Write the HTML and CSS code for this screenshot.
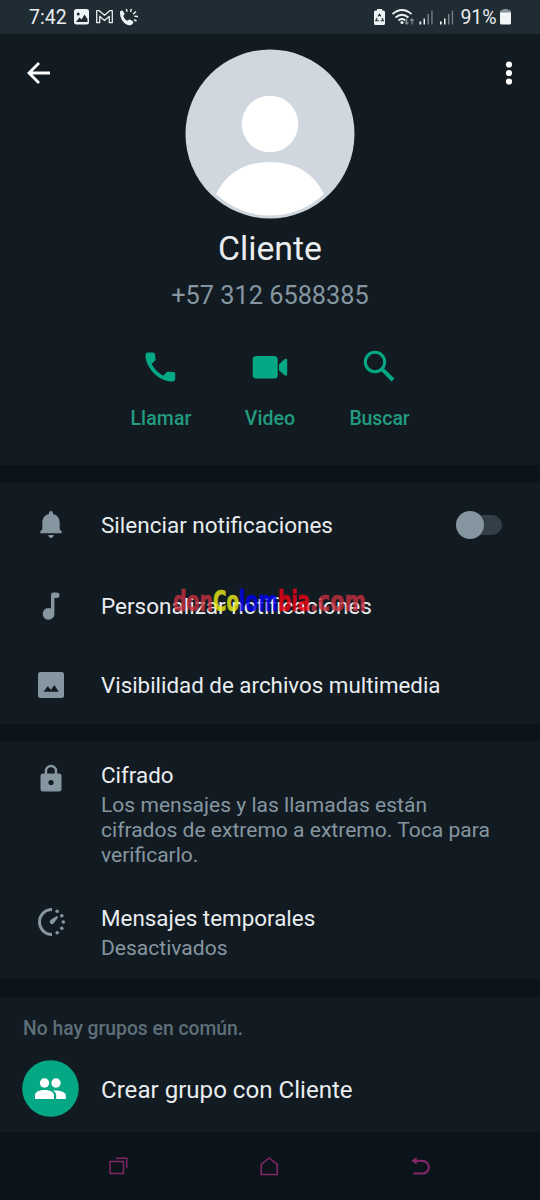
FILE: index.html
```html
<!DOCTYPE html>
<html lang="es">
<head>
<meta charset="utf-8">
<title>Cliente</title>
<link rel="stylesheet" href="styles.css">
</head>
<body>
<div class="status">
  <span class="clock">7:42</span>
  <svg class="status-left" width="66" height="20" viewBox="0 0 66 20">
    <rect x="1" y="1" width="15" height="15.500" rx="2.500" fill="#eef3f5"/>
    <circle cx="5.200" cy="6" r="1.500" fill="#202c33"/>
    <path d="M3 14l3.500-4.500 2 2 3-5 3 4.500v3z" fill="#202c33"/>
    <path d="M23.700 14.700V2.700h2.600l5.200 4.600 5.200-4.600h2.600v12h-3V8.300l-4.800 4.200-4.800-4.200v6.400z" fill="none" stroke="#e6ecef" stroke-width="1.300" stroke-linejoin="round"/>
    <path d="M47 3.500l2.200-1.300 2.600 3.500-1.500 2.200c.8 2.400 2 3.800 4.300 4.800l1.900-1.400 4 2.500c-.6 2.800-2.600 4.200-5.500 3.200-4.700-1.500-8.400-6.800-8-13.500z" fill="#eef3f5"/>
    <path d="M53.300 1l.9 2.800M58.300.8L57.600 4M63 3.500l-3 2.800M65 8.500l-3.600-.2M63.500 13.200l-2.500-1.600" stroke="#eef3f5" stroke-width="1.400"/>
  </svg>
  <svg class="status-right" width="82" height="20" viewBox="0 0 82 20">
    <path d="M3 2.500V1h5v1.500h1.500q1.500 0 1.500 1.500v11.500q0 1.500-1.500 1.500h-8Q0 17 0 15.500V4q0-1.500 1.500-1.500z" fill="#eef3f5"/>
    <path d="M4 8.500l1.500-2.300L7 8.500M8 10l1.300 2.700H6.500M4.700 12.700H1.800L3.100 10" fill="none" stroke="#202c33" stroke-width="1.100"/>
    <g fill="none" stroke="#eef3f5" stroke-width="1.700"><path d="M18.500 6q9.500-8 19 0M21.500 9.500q6.500-5.500 13 0M24.500 12.500q3.500-3 7 0"/></g>
    <circle cx="28" cy="14.500" r="1.500" fill="#eef3f5"/>
    <path d="M32.700 10.500v5.500m-1.800-1.800l1.800 2 1.800-2M38 16.500V11m-1.800 1.800l1.800-2 1.800 2" fill="none" stroke="#83919a" stroke-width="1.100"/>
    <g fill="#eef3f5"><path d="M45.500 13.500h1.700v3h-1.700zM49.500 10.500h1.500v6h-1.500zM66 13.500h1.700v3H66zM70 10.500h1.500v6H70z"/></g>
    <g fill="#75828a"><path d="M53.500 6H55v10.500h-1.500zM57.300 2.500h1.300v14h-1.300zM74 6h1.500v10.500H74zM77.800 2.500h1.300v14h-1.300z"/></g>
  </svg>
  <span class="percent">91%</span>
  <svg class="battery" width="12" height="18" viewBox="0 0 12 18"><path d="M3 2V1h5v1h1.500Q11 2 11 5H0q0-3 1.500-3z" fill="#85929a"/><path d="M0 4.500h11V15q0 1.500-1.500 1.500h-8Q0 16.500 0 15z" fill="#f1f5f6"/></svg>
</div>

<header class="profile">
  <svg class="back" width="26" height="26" viewBox="0 0 26 26"><path d="M25 13H3.500M14 3L4 13l10 10" fill="none" stroke="#fff" stroke-width="2.800"/></svg>
  <svg class="avatar" width="170" height="170" viewBox="0 0 170 170">
    <circle cx="85" cy="85" r="84.500" fill="#d0d7de"/>
    <circle cx="85" cy="75" r="28.300" fill="#fff"/>
    <path d="M31 145Q47 113 85 113t54 32Q116 166.500 85 166.500T31 145z" fill="#fff"/>
  </svg>
  <svg class="more" width="8" height="26" viewBox="0 0 8 26" fill="#fff"><circle cx="4" cy="4.500" r="3.100"/><circle cx="4" cy="13" r="3.100"/><circle cx="4" cy="21.500" r="3.100"/></svg>
  <h1 class="name">Cliente</h1>
  <p class="phone">+57 312 6588385</p>
  <div class="actions">
    <div class="action">
      <svg width="40" height="40" viewBox="0 0 40 40"><path d="M6.800 5.500h5.300q1.600 0 1.800 1.600l.7 4.900q.1 1-.6 1.700l-3.400 3.400q4.300 7.700 11.500 11.600l3.500-3.500q.7-.7 1.700-.5l5.300.4q1.600.2 1.600 1.900v4.700q0 2.500-2.500 2.700C19 35.500 4.600 21.500 4.500 8.300Q4.500 5.500 6.800 5.500z" fill="#05a884"/></svg>
      <span>Llamar</span>
    </div>
    <div class="action">
      <svg width="40" height="40" viewBox="0 0 40 40" fill="#05a884"><rect x="2.700" y="9" width="25" height="22.500" rx="3.500"/><path d="M29 17.200l5.500-5q2.700-1.300 2.700 1v14.100q0 2.300-2.700 1L29 23.500z"/></svg>
      <span>Video</span>
    </div>
    <div class="action buscar">
      <svg width="40" height="40" viewBox="0 0 40 40" fill="none" stroke="#05a884"><circle cx="15" cy="15" r="9.700" stroke-width="3.100"/><path d="M22.300 22.300l10.700 10.700" stroke-width="4"/></svg>
      <span>Buscar</span>
    </div>
  </div>
</header>

<section class="card settings">
  <div class="row">
    <svg class="icon" width="32" height="32" viewBox="0 0 32 32" fill="#8696a0"><path d="M16 2q2 0 2 2v1c4.500 1 6.700 4.500 6.700 9v6.500l2 1.800v1.900H5.300v-1.900l2-1.800V14c0-4.500 2.200-8 6.700-9V4q0-2 2-2z"/><path d="M13.300 26h5.400q-.5 3-2.700 3t-2.700-3z"/></svg>
    <span class="label">Silenciar notificaciones</span>
    <span class="switch"><i class="knob"></i></span>
  </div>
  <div class="row">
    <svg class="icon" width="32" height="32" viewBox="0 0 32 32" fill="#8696a0"><path d="M16 18.500V5q0-2.500 2.500-2.500h3.200q2.800 0 2.800 2.800t-2.800 2.700h-2.300v15a5.900 5.900 0 1 1-3.400-4.500z"/></svg>
    <span class="label">Personalizar notificaciones</span>
    <svg class="watermark" width="200" height="50" viewBox="0 0 200 50">
      <text class="red" x="2" y="34" textLength="40" lengthAdjust="spacingAndGlyphs">don</text>
      <text class="yellow" x="42" y="34" textLength="26" lengthAdjust="spacingAndGlyphs">Co</text>
      <text class="blue" x="68" y="34" textLength="39" lengthAdjust="spacingAndGlyphs">lom</text>
      <text class="bright" x="107" y="34" textLength="32" lengthAdjust="spacingAndGlyphs">bia</text>
      <text class="red" x="139" y="34" textLength="56" lengthAdjust="spacingAndGlyphs">.com</text>
    </svg>
  </div>
  <div class="row">
    <svg class="icon" width="32" height="32" viewBox="0 0 32 32"><rect x="3" y="3" width="26" height="26" rx="2.500" fill="#8696a0"/><path d="M8.500 22.800l4.300-5.500 3.200 3.800 3.300-5.100 4.500 6.800z" fill="#121b22"/></svg>
    <span class="label media">Visibilidad de archivos multimedia</span>
  </div>
</section>

<section class="card privacy">
  <div class="detail">
    <svg class="icon" width="32" height="32" viewBox="0 0 32 32"><path d="M11 12V8a5 5 0 0 1 10 0V12" fill="none" stroke="#8696a0" stroke-width="2.400"/><rect x="5.500" y="10.500" width="21" height="18" rx="2.500" fill="#8696a0"/><circle cx="16" cy="19.500" r="2.600" fill="#121b22"/></svg>
    <div class="copy">
      <div class="title">Cifrado</div>
      <p class="sub">Los mensajes y las llamadas están<br>cifrados de extremo a extremo. Toca para<br>verificarlo.</p>
    </div>
  </div>
  <div class="detail">
    <svg class="icon" width="32" height="32" viewBox="0 0 32 32"><path d="M17 3.500a12.500 12.500 0 0 0 0 25" fill="none" stroke="#8696a0" stroke-width="3"/><path d="M21.800 9.900l1.400 1.400-4.600 6.100q-1.500 1.500-3.200 0t0-3.300z" fill="#8696a0"/><g fill="#8696a0"><circle cx="22.200" cy="5.200" r="1.800"/><circle cx="26.800" cy="9.700" r="1.800"/><circle cx="28.300" cy="16" r="1.800"/><circle cx="26.800" cy="22.300" r="1.800"/><circle cx="22.200" cy="26.800" r="1.800"/></g></svg>
    <div class="copy">
      <div class="title">Mensajes temporales</div>
      <p class="sub">Desactivados</p>
    </div>
  </div>
</section>

<section class="card groups">
  <p class="none">No hay grupos en común.</p>
  <div class="group">
    <svg width="57" height="57" viewBox="0 0 57 57"><circle cx="28.500" cy="28.500" r="28.300" fill="#05a884"/><g fill="#fff"><circle cx="22.500" cy="23" r="4.700"/><circle cx="34" cy="23" r="4.700"/><path d="M13 39v-3.700c0-7 19-7 19 0V39zM34.200 39v-3.700q0-2.700-3.200-4.700c5.500-.7 12.800 1 12.800 4.700V39z"/></g></svg>
    <span class="label create">Crear grupo con Cliente</span>
  </div>
</section>

<nav class="nav">
  <svg width="20" height="20" viewBox="0 0 20 20" fill="none" stroke="#812666" stroke-width="1.500"><rect x="1" y="5.500" width="13.500" height="12" rx=".5"/><path d="M7 2.300h10.700v9.800"/></svg>
  <svg width="20" height="20" viewBox="0 0 20 20" fill="none" stroke="#812666" stroke-width="1.600"><path d="M1.200 18.500V8.500l8-6.500 8 6.500v10z"/></svg>
  <svg width="20" height="20" viewBox="0 0 20 20"><path d="M4 4.800h7.500a6.300 6.300 0 0 1 0 12.700H2.300" fill="none" stroke="#812666" stroke-width="2.200"/><path d="M.3 4.800l5.400-3.600v7.200z" fill="#812666"/></svg>
</nav>
</body>
</html>
```
FILE: styles.css
```css
* { box-sizing: border-box; }
body { margin: 0; width: 540px; height: 1200px; background: #0b141a; color: #e9edef; font-family: Roboto, "Liberation Sans", sans-serif; overflow: hidden; }
svg { display: block; flex: none; }
h1, p { margin: 0; font-weight: 400; }
.status { height: 34px; background: #202c33; display: flex; align-items: flex-start; padding: 8px 28px 0 29px; font-size: 19.5px; line-height: 19px; white-space: nowrap; }
.clock { width: 46px; }
.status-right { margin-left: 235px; }
.percent { width: 40px; margin-left: 4px; }
.battery { margin-left: 1px; }
.profile { height: 431px; background: #121b22; display: grid; grid-template-columns: 185px 170px 185px; grid-template-rows: 170px 61px 30px 1fr; padding-top: 15px; }
.back { margin: 11px 0 0 25px; }
.more { margin: 11px 0 0 150px; }
.name { grid-column: 1 / 4; text-align: center; font-size: 33.8px; line-height: 40px; padding-top: 10px; }
.phone { grid-column: 1 / 4; text-align: center; color: #8696a0; font-size: 25.3px; line-height: 31px; }
.actions { grid-column: 1 / 4; display: grid; grid-template-columns: repeat(3, 109px); justify-content: center; padding-top: 37px; }
.action { display: flex; flex-direction: column; align-items: center; gap: 20px; color: #229b80; font-size: 19.5px; font-weight: 500; line-height: 24px; letter-spacing: .1px; }
.buscar { letter-spacing: -.1px; padding-left: 1px; }
.card { background: #121b22; margin-top: 18px; }
.settings { height: 241px; display: grid; grid-template-rows: 83px 79px 79px; }
.row { display: flex; align-items: center; position: relative; padding-left: 35px; }
.icon { margin-right: 34px; }
.label { font-size: 22.5px; line-height: 28px; padding-top: 1px; white-space: nowrap; }
.media { font-size: 22.35px; }
.create { font-size: 24.1px; padding-top: 2px; }
.switch { position: relative; margin: 0 38px 0 auto; width: 46px; height: 28px; }
.switch::before { content: ""; position: absolute; left: 8px; right: 0; top: 4px; height: 20px; border-radius: 10px; background: #323f47; }
.knob { position: relative; display: block; width: 28px; height: 28px; border-radius: 50%; background: #8696a0; }
.watermark { position: absolute; left: 171px; top: 11px; font: 700 28px "DejaVu Sans", sans-serif; opacity: .8; stroke-width: .7px; stroke-linejoin: round; }
.red { fill: #c6303f; stroke: #c6303f; }
.yellow { fill: #ecee18; stroke: #ecee18; }
.blue { fill: #0000f2; stroke: #0000f2; }
.bright { fill: #f40012; stroke: #f40012; }
.privacy { height: 237px; padding-top: 19px; display: grid; grid-template-rows: 143px 1fr; }
.detail { display: flex; padding-left: 35px; }
.privacy .icon { margin-top: 2px; }
.title { font-size: 22.4px; line-height: 28px; white-space: nowrap; }
.sub { color: #8696a0; font-size: 21.05px; line-height: 25px; padding-top: 3px; white-space: nowrap; }
.groups { height: 135px; padding: 19px 22px 0; }
.none { color: #5f6f79; font-size: 19.3px; line-height: 25px; font-weight: 500; padding-left: 1px; }
.group { display: flex; align-items: center; gap: 22px; padding-top: 19px; }
.nav { height: 68px; display: flex; align-items: center; justify-content: space-between; padding: 0 109px; }
```
